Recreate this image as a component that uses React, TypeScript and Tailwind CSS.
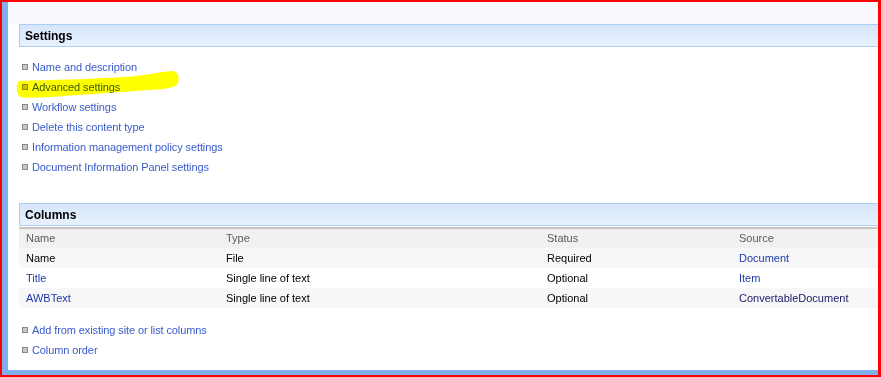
import React from "react";

const font = { fontFamily: '"Liberation Sans", Arial, sans-serif' };

function Bullet() {
  return <span className="inline-block w-[6px] h-[6px] border border-[#8a8a8a] bg-[#c8c8c8] mr-[4px] shrink-0" />;
}

function LinkItem({ text }: { text: string }) {
  return (
    <div className="flex items-center h-[20px] pl-[14px]">
      <Bullet />
      <span className="text-[#3a5ccc] text-[11px] tracking-[-0.1px]">{text}</span>
    </div>
  );
}

function SectionHeader({ title }: { title: string }) {
  return (
    <div className="ml-[11px] h-[23px] flex items-center pl-[5px] border-y border-l border-[#a9cdf4] bg-gradient-to-b from-[#d5e5fb] to-[#e9f2fe]">
      <span className="font-bold text-[12px] text-black">{title}</span>
    </div>
  );
}

const rows = [
  { name: "Name", nameLink: false, type: "File", status: "Required", source: "Document", srcLink: true, bg: "bg-[#f7f7f7]" },
  { name: "Title", nameLink: true, type: "Single line of text", status: "Optional", source: "Item", srcLink: true, bg: "bg-white" },
  { name: "AWBText", nameLink: true, type: "Single line of text", status: "Optional", source: "ConvertableDocument", srcLink: false, bg: "bg-[#f7f7f7]" },
];

export default function App() {
  return (
    <div className="relative w-[881px] h-[377px] overflow-hidden bg-[#ff0000]" style={font}>
      <div className="absolute left-[2px] top-[2px] w-[876px] h-[373px] bg-[#7fb0ee] flex flex-col">
        <div className="ml-[6px] flex-1 bg-white flex flex-col overflow-hidden">
          <div className="h-[22px] bg-[#f7f9fe]" />
          <SectionHeader title="Settings" />
          <div className="mt-[10px]">
            <LinkItem text="Name and description" />
            <LinkItem text="Advanced settings" />
            <LinkItem text="Workflow settings" />
            <LinkItem text="Delete this content type" />
            <LinkItem text="Information management policy settings" />
            <LinkItem text="Document Information Panel settings" />
          </div>
          <div className="mt-[26px]">
            <SectionHeader title="Columns" />
          </div>
          <div className="ml-[11px] mt-[1px] border-t-2 border-[#c4c4c4] text-[11px]">
            <div className="grid grid-cols-[200px_321px_192px_1fr] h-[19px] items-center bg-[#f1f1f1] text-[#5a5a5a] pl-[7px]">
              <span>Name</span>
              <span>Type</span>
              <span>Status</span>
              <span>Source</span>
            </div>
            {rows.map((r) => (
              <div key={r.name} className={`grid grid-cols-[200px_321px_192px_1fr] h-[20px] items-center pl-[7px] ${r.bg}`}>
                <span className={r.nameLink ? "text-[#1f3aa8]" : "text-black"}>{r.name}</span>
                <span className="text-black">{r.type}</span>
                <span className="text-black">{r.status}</span>
                <span className={r.srcLink ? "text-[#1f3aa8]" : "text-[#1a1a6a]"}>{r.source}</span>
              </div>
            ))}
          </div>
          <div className="mt-[12px]">
            <LinkItem text="Add from existing site or list columns" />
            <LinkItem text="Column order" />
          </div>
        </div>
        <div className="h-[5px]" />
      </div>
      <svg className="absolute left-0 top-0 pointer-events-none mix-blend-multiply" width="881" height="377">
        <path
          d="M19 81 C 50 80, 90 79, 125 77 C 150 75, 165 71, 172 71 C 178 71, 180 78, 178 83 C 176 88, 165 89, 150 90 C 120 92, 80 95, 50 97 C 35 98, 24 98, 20 97 C 16 94, 16 84, 19 81 Z"
          fill="#ffff00"
        />
      </svg>
    </div>
  );
}
